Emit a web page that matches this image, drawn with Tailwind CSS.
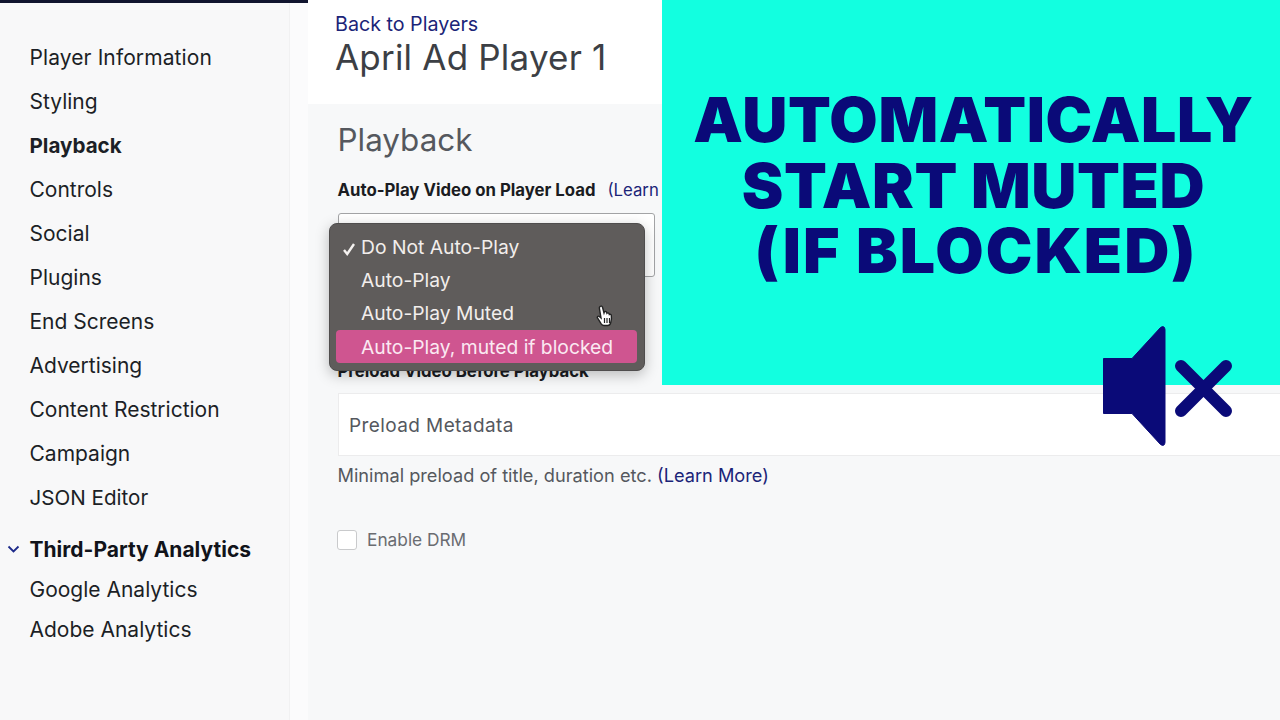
<!DOCTYPE html>
<html lang="en">
<head>
    <meta charset="UTF-8">
    <title>April Ad Player 1 - Playback</title>
    <script src="https://cdn.jsdelivr.net/npm/@tailwindcss/browser@4"></script>
</head>
<body class="w-[1280px] h-[720px] overflow-hidden bg-[#f7f8f9] font-['Inter','Liberation_Sans',sans-serif]">
    <div class="relative flex w-[1280px] h-[720px] overflow-hidden">

        <!-- Sidebar -->
        <aside class="w-[289px] h-full shrink-0 bg-[#f8f8f9] text-[21px] leading-[28px] text-[#1c1f26] pl-[29.5px] pt-[44px]">
            <nav class="flex flex-col gap-[16px]">
                <a class="tracking-[0.1px]">Player Information</a>
                <a>Styling</a>
                <a class="font-bold text-[20.6px]">Playback</a>
                <a>Controls</a>
                <a>Social</a>
                <a>Plugins</a>
                <a>End Screens</a>
                <a>Advertising</a>
                <a>Content Restriction</a>
                <a>Campaign</a>
                <a class="text-[20.6px]">JSON Editor</a>
            </nav>
            <div class="relative mt-[24px] font-bold text-[#11131a]">
                <svg class="absolute left-[-23px] top-[9px] w-[13px] h-[9px]" viewBox="0 0 13 9" fill="none" stroke="#1d2a8a" stroke-width="1.8"><path d="M1.5 1.5 6.5 6.5 11.5 1.5"/></svg>
                Third-Party Analytics
            </div>
            <nav class="flex flex-col gap-[12px] mt-[12px]">
                <a>Google Analytics</a>
                <a>Adobe Analytics</a>
            </nav>
        </aside>

        <!-- Gutter -->
        <div class="w-[19px] h-full shrink-0 bg-[#fbfbfc] border-l border-[#f1f1f2]"></div>

        <!-- Main -->
        <main class="flex-1 min-w-0">
            <header class="h-[104px] bg-white pl-[27px] pt-[12px]">
                <a class="block text-[19.7px] leading-[25px] text-[#1b2478]">Back to Players</a>
                <h1 class="text-[35px] leading-[40px] tracking-[0.2px] text-[#3c3f45]">April Ad Player 1</h1>
            </header>
            <section class="pl-[29.5px] pt-[17px]">
                <h2 class="text-[31.4px] leading-[38px] text-[#55585e]">Playback</h2>
                <div class="mt-[19px] flex gap-[12px] text-[16.75px] leading-[24px] whitespace-nowrap">
                    <span class="font-bold text-[#1a1c22]">Auto-Play Video on Player Load</span>
                    <a class="text-[#1b2478]">(Learn More)</a>
                </div>
                <div class="mt-[11px] w-[317px] h-[64px] rounded-[3px] border border-[#a3a4a6] bg-white"></div>
                <div class="mt-[82px] text-[16.75px] leading-[24px] font-bold text-[#1a1c22]">Preload Video Before Playback</div>
                <div class="mt-[10px] -mr-[10px] h-[63px] flex items-center pl-[10.5px] pt-[3px] bg-white border border-[#ececed] text-[19px] tracking-[0.4px] text-[#55585e]">Preload Metadata</div>
                <p class="mt-[6px] text-[18.2px] leading-[26px] text-[#55585e]">Minimal preload of title, duration etc. <a class="text-[#1b2478]">(Learn More)</a></p>
                <label class="mt-[39px] -ml-[0.5px] flex items-center gap-[10px] text-[17.3px] text-[#6a6c71]">
                    <span class="w-[20px] h-[20px] rounded-[3px] bg-white border border-[#c9cacc]"></span>
                    Enable DRM
                </label>
            </section>
        </main>

        <!-- Top rule over sidebar -->
        <div class="absolute left-0 top-0 w-[308px] h-[3px] bg-[#10142e]"></div>

        <!-- Native select menu -->
        <div class="absolute left-[329px] top-[223px] w-[316px] h-[148px] rounded-[8px] bg-[#5f5c5b] border border-[#4f4d4d] shadow-[0_4px_14px_rgba(0,0,0,0.25)] pt-[7px] pl-[6px] pr-[7px] text-[19.3px] text-[#f2eeec]">
            <div class="relative h-[33px] pl-[25px] leading-[33px]">
                <svg class="absolute left-[6px] top-[11px] w-[14px] h-[14px]" viewBox="0 0 14 14" fill="none" stroke="#f5f2f0" stroke-width="2.4"><path d="M2 8 5.2 12 12 2"/></svg>
                Do Not Auto-Play
            </div>
            <div class="h-[33px] pl-[25px] leading-[33px]">Auto-Play</div>
            <div class="h-[33px] pl-[25px] leading-[33px]">Auto-Play Muted</div>
            <div class="h-[33px] pl-[25px] leading-[34px] rounded-[4px] bg-[#cf5590] text-[#fbe9f2]">Auto-Play, muted if blocked</div>
        </div>

        <!-- Hand cursor -->
        <svg class="absolute left-[595px] top-[304px] w-[20px] h-[24px]" viewBox="0 0 20 24">
            <path d="M5 2.5c1-.8 2.3-.3 2.6 1L9 9l.3-1c.6-.9 2-.7 2.3.3l.3 1c.6-.8 1.900-.5 2.200.4l.2.8c.7-.6 1.800-.2 2 .8.400 2.500.200 5-.6 7.500-.5 1.600-1.500 2.700-3 2.700H9c-1.200 0-2.100-.6-2.800-1.600L2.500 14c-.8-1.200.6-2.500 1.800-1.500l1.700 1.400L4.400 4.500c-.2-.8.100-1.500.6-2Z" fill="#fff" stroke="#222" stroke-width="1.400"/>
            <path d="M9.500 14v5M12 14v5M14.500 14v5" stroke="#222" stroke-width="1.200"/>
        </svg>

        <!-- Promo banner -->
        <div class="absolute left-[662px] top-0 w-[618px] h-[385px] bg-[#12ffe0] pt-[87px] pl-[5px] flex flex-col items-center text-center text-[#0a0a78] text-[62.5px] leading-[65.5px] font-black tracking-[0.6px]">
            <div>AUTOMATICALLY</div>
            <div>START MUTED</div>
            <div class="pl-[5px] tracking-[2px]">(IF BLOCKED)</div>
        </div>

        <!-- Muted speaker icon -->
        <svg class="absolute left-[1100px] top-[322px] w-[136px] h-[128px]" viewBox="0 0 136 128">
            <path d="M3.500 36.500H32L60.500 5.500Q64.500 3 65 7.500V120.500Q64.500 125 60.500 122.500L32 91.500H3.500Z" fill="#0a0a78" stroke="#0a0a78" stroke-width="1" stroke-linejoin="round"/>
            <path d="M81 44 126 89M126 44 81 89" fill="none" stroke="#0a0a78" stroke-width="12" stroke-linecap="round"/>
        </svg>
    </div>
</body>
</html>
